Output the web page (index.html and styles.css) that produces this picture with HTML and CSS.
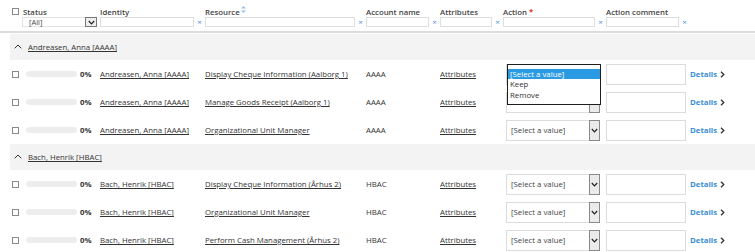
FILE: index.html
```html
<!DOCTYPE html>
<html>
<head>
<meta charset="utf-8">
<link rel="stylesheet" href="styles.css">
</head>
<body>
<div class="head">
  <div class="grid labels">
    <div class="c1"><span class="cb"></span><span class="lbl">Status</span></div>
    <div class="lbl">Identity</div>
    <div class="lbl">Resource<svg class="sort" width="5" height="7" viewBox="0 0 5 7"><path d="M2.5 0 L5 2.5 H0 Z M2.5 7 L5 4.5 H0 Z" fill="#8fc6ef"/></svg></div>
    <div class="lbl">Account name</div>
    <div class="lbl">Attributes</div>
    <div class="lbl">Action<span class="req">*</span></div>
    <div class="lbl">Action comment</div>
    <div></div>
  </div>
  <div class="grid filters">
    <div class="c1">
      <div class="fsel"><span class="ftext">[All]</span><span class="fbtn"><svg width="7" height="5" viewBox="0 0 7 5"><path d="M0.8 1 L3.5 3.8 L6.2 1" fill="none" stroke="#222" stroke-width="1.2"/></svg></span></div>
    </div>
    <div class="fcell"><span class="finp"></span><span class="x">×</span></div>
    <div class="fcell"><span class="finp"></span><span class="x">×</span></div>
    <div class="fcell"><span class="finp"></span><span class="x">×</span></div>
    <div class="fcell"><span class="finp"></span><span class="x">×</span></div>
    <div class="fcell"><span class="finp"></span><span class="x">×</span></div>
    <div class="fcell"><span class="finp"></span><span class="x">×</span></div>
    <div></div>
  </div>
</div>
<div class="sep"></div>
<div class="body">
  <div class="group"><svg class="caret" width="8" height="5" viewBox="0 0 8 5"><path d="M0.7 4.3 L4 1 L7.3 4.3" fill="none" stroke="#333" stroke-width="1"/></svg><a class="lnk">Andreasen, Anna [AAAA]</a></div>

  <div class="grid row">
    <div class="c1"><span class="cb"></span><span class="bar"></span><b class="pct">0%</b></div>
    <div><a class="lnk">Andreasen, Anna [AAAA]</a></div>
    <div><a class="lnk">Display Cheque Information (Aalborg 1)</a></div>
    <div>AAAA</div>
    <div><a class="lnk">Attributes</a></div>
    <div class="act">
      <div class="sel"><span class="stext"></span><span class="sbtn"></span></div>
      <div class="listbox">
        <div class="opt on">[Select a value]</div>
        <div class="opt">Keep</div>
        <div class="opt">Remove</div>
      </div>
    </div>
    <div><span class="cin"></span></div>
    <div class="det">Details<svg width="5" height="7" viewBox="0 0 5 7"><path d="M1 0.8 L3.8 3.5 L1 6.2" fill="none" stroke="#333" stroke-width="1.3"/></svg></div>
  </div>

  <div class="grid row">
    <div class="c1"><span class="cb"></span><span class="bar"></span><b class="pct">0%</b></div>
    <div><a class="lnk">Andreasen, Anna [AAAA]</a></div>
    <div><a class="lnk">Manage Goods Receipt (Aalborg 1)</a></div>
    <div>AAAA</div>
    <div><a class="lnk">Attributes</a></div>
    <div class="act"><div class="sel"><span class="stext"></span><span class="sbtn"><svg width="7" height="5" viewBox="0 0 7 5"><path d="M0.8 1 L3.5 3.8 L6.2 1" fill="none" stroke="#222" stroke-width="1.2"/></svg></span></div></div>
    <div><span class="cin"></span></div>
    <div class="det">Details<svg width="5" height="7" viewBox="0 0 5 7"><path d="M1 0.8 L3.8 3.5 L1 6.2" fill="none" stroke="#333" stroke-width="1.3"/></svg></div>
  </div>

  <div class="grid row">
    <div class="c1"><span class="cb"></span><span class="bar"></span><b class="pct">0%</b></div>
    <div><a class="lnk">Andreasen, Anna [AAAA]</a></div>
    <div><a class="lnk">Organizational Unit Manager</a></div>
    <div>AAAA</div>
    <div><a class="lnk">Attributes</a></div>
    <div class="act"><div class="sel"><span class="stext">[Select a value]</span><span class="sbtn"><svg width="7" height="5" viewBox="0 0 7 5"><path d="M0.8 1 L3.5 3.8 L6.2 1" fill="none" stroke="#222" stroke-width="1.2"/></svg></span></div></div>
    <div><span class="cin"></span></div>
    <div class="det">Details<svg width="5" height="7" viewBox="0 0 5 7"><path d="M1 0.8 L3.8 3.5 L1 6.2" fill="none" stroke="#333" stroke-width="1.3"/></svg></div>
  </div>

  <div class="group"><svg class="caret" width="8" height="5" viewBox="0 0 8 5"><path d="M0.7 4.3 L4 1 L7.3 4.3" fill="none" stroke="#333" stroke-width="1"/></svg><a class="lnk">Bach, Henrik [HBAC]</a></div>

  <div class="grid row">
    <div class="c1"><span class="cb"></span><span class="bar"></span><b class="pct">0%</b></div>
    <div><a class="lnk">Bach, Henrik [HBAC]</a></div>
    <div><a class="lnk">Display Cheque Information (Århus 2)</a></div>
    <div>HBAC</div>
    <div><a class="lnk">Attributes</a></div>
    <div class="act"><div class="sel"><span class="stext">[Select a value]</span><span class="sbtn"><svg width="7" height="5" viewBox="0 0 7 5"><path d="M0.8 1 L3.5 3.8 L6.2 1" fill="none" stroke="#222" stroke-width="1.2"/></svg></span></div></div>
    <div><span class="cin"></span></div>
    <div class="det">Details<svg width="5" height="7" viewBox="0 0 5 7"><path d="M1 0.8 L3.8 3.5 L1 6.2" fill="none" stroke="#333" stroke-width="1.3"/></svg></div>
  </div>

  <div class="grid row">
    <div class="c1"><span class="cb"></span><span class="bar"></span><b class="pct">0%</b></div>
    <div><a class="lnk">Bach, Henrik [HBAC]</a></div>
    <div><a class="lnk">Organizational Unit Manager</a></div>
    <div>HBAC</div>
    <div><a class="lnk">Attributes</a></div>
    <div class="act"><div class="sel"><span class="stext">[Select a value]</span><span class="sbtn"><svg width="7" height="5" viewBox="0 0 7 5"><path d="M0.8 1 L3.5 3.8 L6.2 1" fill="none" stroke="#222" stroke-width="1.2"/></svg></span></div></div>
    <div><span class="cin"></span></div>
    <div class="det">Details<svg width="5" height="7" viewBox="0 0 5 7"><path d="M1 0.8 L3.8 3.5 L1 6.2" fill="none" stroke="#333" stroke-width="1.3"/></svg></div>
  </div>

  <div class="grid row">
    <div class="c1"><span class="cb"></span><span class="bar"></span><b class="pct">0%</b></div>
    <div><a class="lnk">Bach, Henrik [HBAC]</a></div>
    <div><a class="lnk">Perform Cash Management (Århus 2)</a></div>
    <div>HBAC</div>
    <div><a class="lnk">Attributes</a></div>
    <div class="act"><div class="sel"><span class="stext">[Select a value]</span><span class="sbtn"><svg width="7" height="5" viewBox="0 0 7 5"><path d="M0.8 1 L3.5 3.8 L6.2 1" fill="none" stroke="#222" stroke-width="1.2"/></svg></span></div></div>
    <div><span class="cin"></span></div>
    <div class="det">Details<svg width="5" height="7" viewBox="0 0 5 7"><path d="M1 0.8 L3.8 3.5 L1 6.2" fill="none" stroke="#333" stroke-width="1.3"/></svg></div>
  </div>
</div>
</body>
</html>
```

FILE: styles.css
```css
* { box-sizing: border-box; }
html, body { margin: 0; padding: 0; background: #fff; overflow: hidden; }
body {
  font-family: "Open Sans", "Noto Sans", sans-serif;
  font-size: 7.8px;
  color: #333;
  line-height: 10px;
}
.grid {
  display: grid;
  grid-template-columns: 90px 105px 161px 74px 63px 103px 84px 1fr;
  margin-left: 10px;
}
.head { padding-top: 6px; }
.labels { height: 11px; align-items: center; }
.lbl { font-weight: 600; color: #444; white-space: nowrap; }
.c1 { display: flex; align-items: center; }
.cb {
  display: inline-block;
  width: 7px; height: 7px;
  border: 1px solid #8a8a8a;
  background: #fff;
  margin-left: 2px;
  flex: none;
}
.labels .cb { margin-right: 4px; }
.sort { vertical-align: top; margin-left: 1px; margin-top: -1px; }
.req { color: #e0302c; font-weight: 700; margin-left: 2px; vertical-align: top; position: relative; top: -1px; }
.filters { height: 10px; }
.fsel {
  margin-left: 12px;
  width: 75px; height: 10px;
  border: 1px solid #e2e2e2;
  display: flex;
  align-items: center;
}
.ftext { flex: 1; padding-left: 6px; color: #444; font-size: 7.5px; }
.fbtn {
  width: 12px; height: 10px;
  border: 1px solid #777;
  background: #eee;
  display: flex; align-items: center; justify-content: center;
  margin-right: -1px;
}
.fcell { display: flex; align-items: center; }
.finp { flex: 1; height: 10px; border: 1px solid #dedede; background: #fff; }
.x { width: 11px; text-align: center; color: #4a8fd8; font-size: 8px; line-height: 10px; }
.sep { margin-top: 4px; height: 2px; background: #dcdcdc; }
.body { padding-top: 1px; }
.group {
  margin-left: 10px;
  height: 26px;
  background: #f3f3f3;
  display: flex;
  align-items: center;
  padding-left: 4px;
}
.caret { margin-right: 6px; margin-top: -1px; }
.lnk { color: #333; text-decoration: underline; white-space: nowrap; }
.row { height: 28px; align-items: center; white-space: nowrap; }
.bar {
  display: inline-block;
  width: 51px; height: 6px;
  border-radius: 3px;
  background: #ededed;
  margin-left: 7px;
}
.pct { margin-left: 3px; font-weight: 700; color: #333; }
.act { position: relative; padding-left: 3px; }
.sel {
  width: 94px; height: 21px;
  border: 1px solid #dcdcdc;
  background: #fff;
  display: flex;
  align-items: center;
}
.stext { flex: 1; padding-left: 4px; color: #444; }
.sbtn {
  width: 11px; height: 21px;
  border: 1px solid #8a8a8a;
  background: #ebebeb;
  margin: -1px -1px -1px 0;
  display: flex; align-items: center; justify-content: center;
}
.cin { display: block; width: 80px; height: 21px; border: 1px solid #dcdcdc; background: #fff; }
.det { color: #3a8ed6; font-weight: 700; display: flex; align-items: center; gap: 3px; }
.listbox {
  position: absolute;
  left: 4px; top: 0;
  width: 94px; height: 41px;
  border: 1.5px solid #1e1e1e;
  background: #fff;
  padding-top: 4px;
  z-index: 2;
}
.opt { height: 10.5px; line-height: 10.5px; padding-left: 2px; color: #333; }
.opt.on { background: #2a9be2; color: #fff; }
```
